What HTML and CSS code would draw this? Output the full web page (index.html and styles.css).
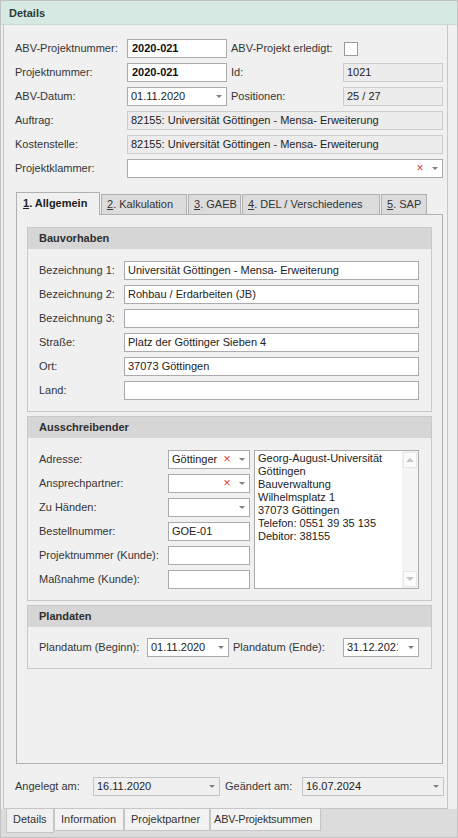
FILE: index.html
```html
<!DOCTYPE html>
<html lang="de">
<head>
<meta charset="utf-8">
<title>Details</title>
<link rel="stylesheet" href="styles.css">
</head>
<body>
<div class="win">
  <div class="hdr">Details</div>
  <div class="main">
    <div class="panel">
      <div class="top">
        <div class="row">
          <span class="lbl w112">ABV-Projektnummer:</span>
          <div class="fld w100 bold">2020-021</div>
          <span class="lbl w112 ml4">ABV-Projekt erledigt:</span>
          <div class="chk"></div>
        </div>
        <div class="row">
          <span class="lbl w112">Projektnummer:</span>
          <div class="fld w100 bold">2020-021</div>
          <span class="lbl w112 ml4">Id:</span>
          <div class="fld ro w100">1021</div>
        </div>
        <div class="row">
          <span class="lbl w112">ABV-Datum:</span>
          <div class="fld combo w100"><span class="val">01.11.2020</span><span class="arr"></span></div>
          <span class="lbl w112 ml4">Positionen:</span>
          <div class="fld ro w100">25 / 27</div>
        </div>
        <div class="row">
          <span class="lbl w112">Auftrag:</span>
          <div class="fld ro grow">82155: Universität Göttingen - Mensa- Erweiterung</div>
        </div>
        <div class="row">
          <span class="lbl w112">Kostenstelle:</span>
          <div class="fld ro grow">82155: Universität Göttingen - Mensa- Erweiterung</div>
        </div>
        <div class="row">
          <span class="lbl w112">Projektklammer:</span>
          <div class="fld combo grow"><span class="val"></span><span class="clr">×</span><span class="arr"></span></div>
        </div>
      </div>

      <div class="tabstrip">
        <div class="tab active t1"><u>1</u>. Allgemein</div>
        <div class="tab t2"><u>2</u>. Kalkulation</div>
        <div class="tab t3"><u>3</u>. GAEB</div>
        <div class="tab t4"><u>4</u>. DEL / Verschiedenes</div>
        <div class="tab t5"><u>5</u>. SAP</div>
      </div>
      <div class="tabpanel">
        <div class="group g1">
          <div class="ghdr">Bauvorhaben</div>
          <div class="gbody">
            <div class="row"><span class="lbl w85">Bezeichnung 1:</span><div class="fld grow">Universität Göttingen - Mensa- Erweiterung</div></div>
            <div class="row"><span class="lbl w85">Bezeichnung 2:</span><div class="fld grow">Rohbau / Erdarbeiten (JB)</div></div>
            <div class="row"><span class="lbl w85">Bezeichnung 3:</span><div class="fld grow"></div></div>
            <div class="row"><span class="lbl w85">Straße:</span><div class="fld grow">Platz der Göttinger Sieben 4</div></div>
            <div class="row"><span class="lbl w85">Ort:</span><div class="fld grow">37073 Göttingen</div></div>
            <div class="row"><span class="lbl w85">Land:</span><div class="fld grow"></div></div>
          </div>
        </div>

        <div class="group g2">
          <div class="ghdr">Ausschreibender</div>
          <div class="gbody split">
            <div class="col">
              <div class="row"><span class="lbl w129">Adresse:</span><div class="fld combo w82"><span class="val">Göttinger</span><span class="clr">×</span><span class="arr"></span></div></div>
              <div class="row"><span class="lbl w129">Ansprechpartner:</span><div class="fld combo w82"><span class="val"></span><span class="clr">×</span><span class="arr"></span></div></div>
              <div class="row"><span class="lbl w129">Zu Händen:</span><div class="fld combo w82"><span class="val"></span><span class="arr"></span></div></div>
              <div class="row"><span class="lbl w129">Bestellnummer:</span><div class="fld w82">GOE-01</div></div>
              <div class="row"><span class="lbl w129">Projektnummer (Kunde):</span><div class="fld w82"></div></div>
              <div class="row"><span class="lbl w129">Maßnahme (Kunde):</span><div class="fld w82"></div></div>
            </div>
            <div class="memo">
              <div class="memotext">Georg-August-Universität<br>Göttingen<br>Bauverwaltung<br>Wilhelmsplatz 1<br>37073 Göttingen<br>Telefon: 0551 39 35 135<br>Debitor: 38155</div>
              <div class="sbar">
                <div class="sbtn"><span class="up"></span></div>
                <div class="strack"></div>
                <div class="sbtn"><span class="dn"></span></div>
              </div>
            </div>
          </div>
        </div>

        <div class="group g3">
          <div class="ghdr">Plandaten</div>
          <div class="gbody pd">
            <div class="row">
              <span class="lbl w108">Plandatum (Beginn):</span>
              <div class="fld combo w82"><span class="val">01.11.2020</span><span class="arr"></span></div>
              <span class="lbl w110 ml4">Plandatum (Ende):</span>
              <div class="fld combo w76 tight"><span class="val">31.12.2021</span><span class="arr"></span></div>
            </div>
          </div>
        </div>
      </div>

      <div class="row bottomrow">
        <span class="lbl w78">Angelegt am:</span>
        <div class="fld combo w127 soft"><span class="val">16.11.2020</span><span class="arr"></span></div>
        <span class="lbl w77 ml5">Geändert am:</span>
        <div class="fld combo w142 soft"><span class="val">16.07.2024</span><span class="arr"></span></div>
      </div>
    </div>
  </div>
  <div class="btabs">
    <div class="btab bactive b1">Details</div>
    <div class="btab b2">Information</div>
    <div class="btab b3">Projektpartner</div>
    <div class="btab b4">ABV-Projektsummen</div>
  </div>
</div>
</body>
</html>
```
FILE: styles.css
```css
* { box-sizing: border-box; }
html, body { margin: 0; padding: 0; }
body {
  font-family: "Liberation Sans", Arial, sans-serif;
  font-size: 11px;
  color: #333;
  background: #f0f0f0;
}
.win {
  width: 458px;
  height: 838px;
  border: 1px solid #c2c2c2;
  background: #f0f0f0;
  display: flex;
  flex-direction: column;
}
.hdr {
  height: 24px;
  flex: none;
  background: #d6eae3;
  border-bottom: 1px solid #c6dad3;
  font-weight: bold;
  color: #2b3a35;
  padding-left: 8px;
  line-height: 24px;
  font-size: 11px;
}
.main {
  height: 784px;
  flex: none;
  padding: 0 9px 0 2px;
}
.panel {
  height: 784px;
  border: 1px solid #c6c6c6;
  border-top: none;
  background: #f0f0f0;
  padding: 14px 0 0 0;
  display: flex;
  flex-direction: column;
}
.top {
  padding: 0 4px 0 11px;
  display: flex;
  flex-direction: column;
  gap: 5px;
}
.row {
  display: flex;
  align-items: center;
  height: 19px;
}
.lbl {
  flex: none;
  white-space: nowrap;
  line-height: 19px;
  color: #353535;
}
.w112 { width: 112px; }
.w85 { width: 85px; }
.w129 { width: 129px; }
.w108 { width: 108px; }
.w110 { width: 110px; }
.w78 { width: 78px; }
.w77 { width: 77px; }
.ml4 { margin-left: 4px; }
.ml5 { margin-left: 5px; }

.fld {
  flex: none;
  height: 19px;
  border: 1px solid #ababab;
  background: #fff;
  color: #222;
  line-height: 17px;
  padding-left: 3px;
  white-space: nowrap;
  overflow: hidden;
  display: flex;
  align-items: center;
}
.fld.grow { flex: 1; }
.fld.ro { background: #ececec; border-color: #cdcdcd; padding-left: 3px; }
.fld.bold { font-weight: bold; color: #111; padding-left: 4px; }
.w100 { width: 100px; }
.w82 { width: 82px; }
.w76 { width: 76px; }
.w127 { width: 127px; }
.w142 { width: 142px; }
.fld.soft { border-color: #c4c4c4; background: #f0f0f0; }

.combo .val {
  flex: 1;
  overflow: hidden;
  white-space: nowrap;
  min-width: 0;
}
.combo .clr {
  flex: none;
  color: #d43a3a;
  font-size: 12px;
  width: 12px;
  text-align: center;
  line-height: 17px;
  margin-right: 3px;
}
.combo .arr {
  flex: none;
  width: 13px;
  height: 17px;
  position: relative;
}
.combo.tight .arr { width: 20px; }
.combo .arr::after {
  content: "";
  position: absolute;
  left: 3px;
  top: 7px;
  border-left: 3px solid transparent;
  border-right: 3px solid transparent;
  border-top: 3px solid #808080;
}
.combo.tight .arr::after { left: 10px; }

.chk {
  width: 14px;
  height: 14px;
  border: 1px solid #9a9a9a;
  background: #fff;
  margin-left: 1px;
}

/* tabs */
.tabstrip {
  margin: 14px 0 0 12px;
  height: 22px;
  display: flex;
  align-items: flex-end;
}
.tab {
  height: 20px;
  border: 1px solid #b0b0b0;
  border-bottom: none;
  background: #dcdcdc;
  padding-left: 5px;
  line-height: 19px;
  white-space: nowrap;
  color: #333;
  margin-right: 1px;
}
.tab u { text-decoration: underline; }
.tab.active {
  height: 23px;
  margin-bottom: -1px;
  background: #f0f0f0;
  font-weight: bold;
  position: relative;
  z-index: 1;
  line-height: 21px;
  padding-left: 6px;
  color: #222;
}
.t1 { width: 84px; }
.t2 { width: 86px; }
.t3 { width: 53px; }
.t4 { width: 138px; }
.t5 { width: 46px; }

.tabpanel {
  margin: 0 4px 0 12px;
  height: 550px;
  border: 1px solid #b0b0b0;
  background: #f0f0f0;
  padding: 12px 10px 0 10px;
  display: flex;
  flex-direction: column;
  gap: 4px;
}
.group {
  border: 1px solid #c8c8c8;
  background: #f0f0f0;
  flex: none;
}
.g1 { height: 185px; }
.g2 { height: 185px; }
.g3 { height: 64px; }
.ghdr {
  height: 21px;
  background: #d6d6d6;
  font-weight: bold;
  color: #2e2e2e;
  line-height: 21px;
  padding-left: 11px;
}
.gbody {
  padding: 12px 12px 0 11px;
  display: flex;
  flex-direction: column;
  gap: 5px;
}
.gbody.pd { padding-top: 11px; }
.gbody.split {
  flex-direction: row;
  gap: 4px;
}
.col {
  display: flex;
  flex-direction: column;
  gap: 5px;
}
.memo {
  width: 165px;
  height: 139px;
  border: 1px solid #ababab;
  background: #fff;
  display: flex;
}
.memotext {
  flex: 1;
  padding: 1px 0 0 3px;
  line-height: 13px;
  color: #222;
  white-space: nowrap;
  overflow: hidden;
}
.sbar {
  width: 16px;
  flex: none;
  background: #f4f4f4;
  display: flex;
  flex-direction: column;
  padding: 1px;
}
.sbtn {
  height: 16px;
  background: #fbfbfb;
  border: 1px solid #e6e6e6;
  display: flex;
  align-items: center;
  justify-content: center;
}
.strack { flex: 1; }
.up {
  border-left: 4px solid transparent;
  border-right: 4px solid transparent;
  border-bottom: 4px solid #c6c6c6;
}
.dn {
  border-left: 4px solid transparent;
  border-right: 4px solid transparent;
  border-top: 4px solid #c6c6c6;
}

.bottomrow {
  margin: 13px 4px 0 11px;
}

/* bottom tabs */
.btabs {
  flex: 1;
  background: #dcdcdc;
  display: flex;
  align-items: flex-start;
  padding-left: 5px;
}
.btab {
  height: 22px;
  border: 1px solid #c6c6c6;
  border-top: none;
  background: #f3f3f3;
  line-height: 21px;
  padding-left: 6px;
  white-space: nowrap;
  color: #333;
}
.btab.bactive {
  height: 24px;
  background: #f0f0f0;
}
.b1 { width: 48px; }
.b2 { width: 70px; }
.b3 { width: 86px; }
.b4 { width: 111px; padding-left: 3px; letter-spacing: -0.2px; }
```
